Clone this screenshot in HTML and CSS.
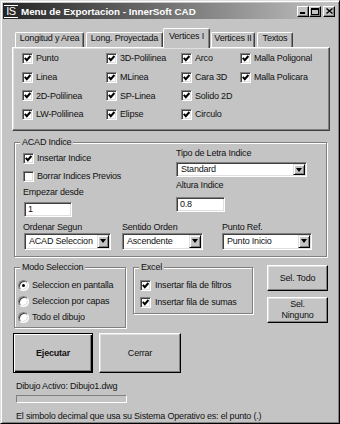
FILE: index.html
```html
<!DOCTYPE html>
<html lang="es">
<head>
    <meta charset="UTF-8">
    <title>Menu de Exportacion - InnerSoft CAD</title>
    <link rel="stylesheet" href="styles.css">
</head>
<body>
<div class="window">
    <!-- Title bar -->
    <div class="titlebar">
        <span class="app-icon">IS</span>
        <span class="title">Menu de Exportacion - InnerSoft CAD</span>
        <div class="title-buttons">
            <span class="tb"><svg width="6" height="6" viewBox="0 0 6 6"><rect x="0" y="4" width="5" height="2" fill="#000"/></svg></span>
            <span class="tb"><svg width="8" height="7" viewBox="0 0 8 7"><rect x="0.5" y="0.5" width="7" height="6" fill="none" stroke="#000"/><rect x="0" y="0" width="8" height="2" fill="#000"/></svg></span>
            <span class="tb tb-close"><svg width="7" height="6" viewBox="0 0 7 6"><path d="M0.5 0.5 L6.5 5.5 M6.5 0.5 L0.5 5.5" stroke="#000" stroke-width="1.4"/></svg></span>
        </div>
    </div>

    <div class="content">
        <!-- Tabs -->
        <div class="tabs">
            <div class="tab tab-1">Longitud y Area</div>
            <div class="tab tab-2">Long. Proyectada</div>
            <div class="tab tab-3 active">Vertices I</div>
            <div class="tab tab-4">Vertices II</div>
            <div class="tab tab-5">Textos</div>
        </div>
        <div class="tab-panel">
            <div class="check-grid">
                <label class="check"><span class="box checked"></span>Punto</label>
                <label class="check"><span class="box checked"></span>3D-Polilinea</label>
                <label class="check"><span class="box checked"></span>Arco</label>
                <label class="check"><span class="box checked"></span>Malla Poligonal</label>
                <label class="check"><span class="box checked"></span>Linea</label>
                <label class="check"><span class="box checked"></span>MLinea</label>
                <label class="check"><span class="box checked"></span>Cara 3D</label>
                <label class="check"><span class="box checked"></span>Malla Policara</label>
                <label class="check"><span class="box checked"></span>2D-Polilinea</label>
                <label class="check"><span class="box checked"></span>SP-Linea</label>
                <label class="check"><span class="box checked"></span>Solido 2D</label>
                <span></span>
                <label class="check"><span class="box checked"></span>LW-Polilinea</label>
                <label class="check"><span class="box checked"></span>Elipse</label>
                <label class="check"><span class="box checked"></span>Circulo</label>
                <span></span>
            </div>
        </div>

        <!-- ACAD Indice -->
        <div class="group group-acad">
            <div class="group-title">ACAD Indice</div>
            <div class="acad-body">
                <div class="acad-top">
                    <div class="acad-left">
                        <label class="check"><span class="box checked"></span>Insertar Indice</label>
                        <label class="check"><span class="box"></span>Borrar Indices Previos</label>
                        <div class="field-label label-start">Empezar desde</div>
                        <div class="input input-start">1</div>
                    </div>
                    <div class="acad-right">
                        <div class="field-label">Tipo de Letra Indice</div>
                        <div class="combo combo-font"><span class="combo-text">Standard</span><span class="combo-arrow"></span></div>
                        <div class="field-label label-height">Altura Indice</div>
                        <div class="input input-height">0.8</div>
                    </div>
                </div>
                <div class="acad-bottom">
                    <div class="field field-order">
                        <div class="field-label">Ordenar Segun</div>
                        <div class="combo combo-order"><span class="combo-text">ACAD Seleccion</span><span class="combo-arrow"></span></div>
                    </div>
                    <div class="field field-sense">
                        <div class="field-label">Sentido Orden</div>
                        <div class="combo combo-sense"><span class="combo-text">Ascendente</span><span class="combo-arrow"></span></div>
                    </div>
                    <div class="field">
                        <div class="field-label">Punto Ref.</div>
                        <div class="combo combo-ref"><span class="combo-text">Punto Inicio</span><span class="combo-arrow"></span></div>
                    </div>
                </div>
            </div>
        </div>

        <!-- Seleccion / Excel / buttons -->
        <div class="lower">
            <div class="group group-mode">
                <div class="group-title">Modo Seleccion</div>
                <div class="mode-body">
                    <label class="radio-row"><span class="radio on"></span>Seleccion en pantalla</label>
                    <label class="radio-row"><span class="radio"></span>Seleccion por capas</label>
                    <label class="radio-row"><span class="radio"></span>Todo el dibujo</label>
                </div>
            </div>
            <div class="group group-excel">
                <div class="group-title">Excel</div>
                <div class="excel-body">
                    <label class="check"><span class="box checked"></span>Insertar fila de filtros</label>
                    <label class="check"><span class="box checked"></span>Insertar fila de sumas</label>
                </div>
            </div>
            <div class="side-buttons">
                <button class="btn btn-side">Sel. Todo</button>
                <button class="btn btn-side">Sel.<br>Ninguno</button>
            </div>
        </div>

        <div class="actions">
            <button class="btn btn-run">Ejecutar</button>
            <button class="btn btn-close">Cerrar</button>
        </div>

        <div class="status">
            <div class="active-file">Dibujo Activo: Dibujo1.dwg</div>
            <div class="progress"></div>
            <div class="decimal-note">El simbolo decimal que usa su Sistema Operativo es: el punto (.)</div>
        </div>
    </div>
</div>
</body>
</html>
```
FILE: styles.css
```css
* {
    box-sizing: border-box;
}
body {
    margin: 0;
    background-color: #c4c4c4;
    font-family: "Liberation Sans", Arial, sans-serif;
    font-size: 9px;
    letter-spacing: -0.2px;
    color: #111;
}
.window {
    width: 340px;
    height: 424px;
    padding: 2px;
    background-color: #c4c4c4;
    border: 1px solid;
    border-color: #dfdfdf #000 #000 #dfdfdf;
    box-shadow: inset 1px 1px #fff, inset -1px -1px #808080;
}

/* title bar */
.titlebar {
    height: 16px;
    display: flex;
    align-items: center;
    padding: 0 2px 0 1px;
    background: linear-gradient(to right, #242424, #c3c3c3);
    color: #fff;
}
.app-icon {
    width: 14px;
    height: 13px;
    border-top: 1px solid #fff;
    border-bottom: 1px solid #fff;
    font-size: 11px;
    line-height: 11px;
    letter-spacing: -0.5px;
    text-align: center;
}
.title {
    flex: 1;
    margin-left: 3px;
    font-size: 9.8px;
    font-weight: bold;
    letter-spacing: 0;
}
.title-buttons {
    display: flex;
}
.tb {
    width: 12px;
    height: 11px;
    display: flex;
    align-items: center;
    justify-content: center;
    background-color: #c4c4c4;
    border: 1px solid;
    border-color: #fff #000 #000 #fff;
    box-shadow: inset -1px -1px #808080;
}
.tb-close {
    margin-left: 2px;
}

.content {
    padding-left: 9px;
}

/* tabs */
.tabs {
    display: flex;
    align-items: flex-end;
    height: 19px;
    margin-top: 9px;
    padding-left: 3px;
}
.tab {
    height: 15px;
    line-height: 11px;
    text-align: center;
    white-space: nowrap;
    border: 1px solid;
    border-bottom: none;
    border-color: #fff #404040 #404040 #fff;
    border-radius: 2px 2px 0 0;
    box-shadow: inset -1px 0 #808080;
}
.tab.active {
    height: 20px;
    line-height: 14px;
    margin-bottom: -1px;
    position: relative;
    z-index: 1;
    background-color: #c4c4c4;
}
.tab-1 { width: 69px; }
.tab-2 { width: 77px; margin-left: 2px; }
.tab-3 { width: 47px; }
.tab-4 { width: 44px; margin-left: 1px; }
.tab-5 { width: 36px; margin-left: 2px; }

.tab-panel {
    width: 318px;
    height: 84px;
    padding: 1px 0 0 9px;
    border: 1px solid;
    border-color: #fff #404040 #404040 #fff;
    box-shadow: inset -1px -1px #808080, inset 1px 1px #dfdfdf;
}
.check-grid {
    display: grid;
    grid-template-columns: 84px 75px 59px auto;
    grid-auto-rows: 18.7px;
}

/* checkbox */
.check {
    display: flex;
    align-items: center;
    gap: 3px;
    white-space: nowrap;
}
.box {
    flex: none;
    width: 11px;
    height: 11px;
    background-color: #fff;
    border: 1px solid;
    border-color: #808080 #fff #fff #808080;
    box-shadow: inset 1px 1px #404040, inset -1px -1px #dfdfdf;
}
.box.checked {
    background: #fff url("data:image/svg+xml,%3Csvg xmlns='http://www.w3.org/2000/svg' width='9' height='9' viewBox='0 0 9 9'%3E%3Cpath d='M1.8 3.8 L3.8 6.2 L7.4 2' fill='none' stroke='%23000' stroke-width='2'/%3E%3C/svg%3E") center / 9px 9px no-repeat;
}

/* group boxes */
.group {
    border: 1px solid #808080;
    box-shadow: inset 1px 1px #fff, 1px 1px #fff;
}
.group-title {
    display: table;
    margin: -6px 0 0 5px;
    padding: 0 2px;
    line-height: 11px;
    background-color: #c4c4c4;
}
.group-acad {
    width: 313px;
    height: 115px;
    margin: 11px 0 0 2px;
}
.acad-body {
    padding-left: 8px;
}
.acad-top {
    display: flex;
}
.acad-left {
    width: 153px;
    padding-top: 1px;
}
.acad-left .check {
    height: 18px;
}
.field-label {
    line-height: 11px;
    white-space: nowrap;
}
.label-start {
    margin-top: 1.5px;
}
.label-height {
    margin-top: 2.5px;
}

/* text inputs and combos */
.input, .combo {
    background-color: #fff;
    border: 1px solid;
    border-color: #808080 #fff #fff #808080;
    box-shadow: inset 1px 1px #404040, inset -1px -1px #dfdfdf;
}
.input {
    height: 15px;
    padding-left: 3px;
    line-height: 12px;
}
.input-start {
    width: 48px;
    margin: 4px 0 0 1px;
}
.input-height {
    width: 49px;
    margin-top: 6.5px;
}
.combo {
    height: 17px;
    display: flex;
    padding: 1px;
}
.combo-text {
    flex: 1;
    padding-left: 3px;
    line-height: 13px;
    white-space: nowrap;
    overflow: hidden;
}
.combo-arrow {
    width: 12px;
    background-color: #c4c4c4;
    border: 1px solid;
    border-color: #dfdfdf #000 #000 #dfdfdf;
    box-shadow: inset 1px 1px #fff, inset -1px -1px #808080;
    display: flex;
    align-items: center;
    justify-content: center;
}
.combo-arrow::after {
    content: "";
    border-left: 3.5px solid transparent;
    border-right: 3.5px solid transparent;
    border-top: 4px solid #000;
}
.combo-font {
    width: 131px;
    height: 15px;
    margin-top: 3px;
}
.combo-font .combo-text {
    line-height: 11px;
}
.acad-bottom {
    display: flex;
    margin-top: 5px;
}
.field-order {
    width: 99px;
}
.field-sense {
    width: 100px;
}
.combo-order {
    width: 87px;
    margin-left: 1px;
}
.combo-sense {
    width: 81px;
}
.combo-ref {
    width: 90px;
}

/* lower section */
.lower {
    display: flex;
    margin: 10px 0 0 2px;
}
.group-mode {
    width: 112px;
    height: 61px;
}
.mode-body {
    padding: 4px 0 0 3px;
}
.radio-row {
    height: 16px;
    display: flex;
    align-items: center;
    gap: 3px;
    white-space: nowrap;
}
.radio {
    flex: none;
    width: 11px;
    height: 11px;
    border-radius: 50%;
    background-color: #fff;
    border: 1px solid;
    border-color: #808080 #fff #fff #808080;
    box-shadow: inset 1px 1px #404040, inset -1px -1px #dfdfdf;
    display: flex;
    align-items: center;
    justify-content: center;
}
.radio.on::after {
    content: "";
    width: 3px;
    height: 3px;
    border-radius: 50%;
    background-color: #000;
}
.group-excel {
    width: 120px;
    height: 47px;
    margin-left: 7px;
}
.excel-body {
    padding: 3.5px 0 0 6px;
}
.excel-body .check {
    height: 17px;
    gap: 4px;
}
.side-buttons {
    display: flex;
    flex-direction: column;
    gap: 6px;
    width: 61px;
    margin: -2px 0 0 14px;
}

/* buttons */
.btn {
    display: flex;
    align-items: center;
    justify-content: center;
    padding: 0;
    font-family: inherit;
    font-size: 9px;
    letter-spacing: -0.2px;
    line-height: 11px;
    color: #111;
    background-color: #c4c4c4;
    border: 1px solid;
    border-color: #fff #000 #000 #fff;
    box-shadow: inset -1px -1px #808080, inset 1px 1px #dfdfdf;
}
.btn-side {
    height: 26px;
}
.actions {
    display: flex;
    margin: 5px 0 0 1px;
}
.btn-run {
    width: 80px;
    height: 40px;
    font-weight: bold;
    border-color: #000;
    box-shadow: inset 1px 1px #fff, inset -1px -1px #000, inset -2px -2px #808080;
}
.btn-close {
    width: 82px;
    height: 40px;
    margin-left: 6px;
}

/* status */
.status {
    padding-left: 4px;
}
.active-file {
    margin-top: 7.5px;
    line-height: 11px;
}
.progress {
    width: 111px;
    height: 8px;
    margin-top: 3.5px;
    border: 1px solid;
    border-color: #808080 #fff #fff #808080;
}
.decimal-note {
    margin-top: 7.5px;
    line-height: 11px;
    white-space: nowrap;
}
```
